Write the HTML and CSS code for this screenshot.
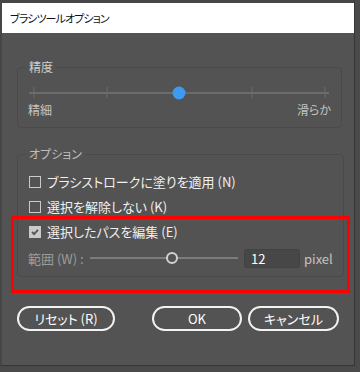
FILE: index.html
```html
<!DOCTYPE html>
<html lang="ja">
<head>
    <meta charset="UTF-8">
    <title>ブラシツールオプション</title>
    <link rel="stylesheet" href="styles.css">
</head>
<body>
    <div class="dialog">
        <div class="titlebar">ブラシツールオプション</div>

        <div class="content">
            <!-- 精度 -->
            <fieldset class="group group-precision">
                <legend>精度</legend>
                <svg class="slider" width="302" height="14" viewBox="0 0 302 14">
                    <line x1="0" y1="7" x2="300" y2="7" stroke="#6c6c6c" stroke-width="2"/>
                    <line x1="5" y1="1" x2="5" y2="12" stroke="#6c6c6c" stroke-width="1"/>
                    <line x1="78" y1="1" x2="78" y2="12" stroke="#6c6c6c" stroke-width="1"/>
                    <line x1="223" y1="1" x2="223" y2="12" stroke="#6c6c6c" stroke-width="1"/>
                    <line x1="296" y1="1" x2="296" y2="12" stroke="#6c6c6c" stroke-width="1"/>
                    <circle cx="150" cy="7" r="6.5" fill="#3e9af0"/>
                </svg>
                <div class="slider-labels">
                    <span>精細</span>
                    <span>滑らか</span>
                </div>
            </fieldset>

            <!-- オプション -->
            <fieldset class="group group-options">
                <legend>オプション</legend>
                <label class="check"><span class="box"></span>ブラシストロークに塗りを適用 (N)</label>
                <label class="check"><span class="box"></span>選択を解除しない (K)</label>
                <label class="check"><span class="box checked">
                    <svg width="10" height="10" viewBox="0 0 10 10"><path d="M2 5 L4.1 7.1 L8 2.8" fill="none" stroke="#555" stroke-width="1.8"/></svg>
                </span>選択したパスを編集 (E)</label>
                <div class="range-row">
                    <span class="range-label">範囲 (W) :</span>
                    <svg class="range-slider" width="150" height="14" viewBox="0 0 150 14">
                        <line x1="0" y1="7" x2="148" y2="7" stroke="#7c7c7c" stroke-width="2"/>
                        <circle cx="82" cy="7" r="5" fill="#535353" stroke="#d2d2d2" stroke-width="2"/>
                    </svg>
                    <div class="num-input">12</div>
                    <span class="unit">pixel</span>
                </div>
            </fieldset>

            <div class="buttons">
                <button class="btn btn-reset">リセット (R)</button>
                <button class="btn btn-ok">OK</button>
                <button class="btn btn-cancel">キャンセル</button>
            </div>

            <!-- 強調枠 -->
            <div class="highlight"></div>
        </div>
    </div>
</body>
</html>
```

FILE: styles.css
```css
/* 基本 */
body {
    margin: 0;
    background: #4a4a4a;
    font-family: "Noto Sans CJK JP", "Noto Sans", sans-serif;
    font-feature-settings: "palt";
    font-size: 12px;
    color: #ececec;
}

/* ダイアログ */
.dialog {
    width: 352px;
    height: 362px;
    background: #535353;
    border-top: 3px solid #464646;
    border-left: 2px solid #464646;
    border-right: 1px solid #363636;
    border-bottom: 1px solid #363636;
}

.titlebar {
    height: 30px;
    background: #fff;
    color: #111;
    line-height: 30px;
    padding-left: 8px;
    font-size: 11px;
    letter-spacing: -0.9px;
}

.content {
    position: relative;
    padding: 27px 13px 0 15px;
}

/* グループ枠 */
.group {
    margin: 0;
    border: 1px solid #4a4a4a;
    border-radius: 4px;
    padding: 0 10px;
}

.group legend {
    padding: 0 3px;
    margin-left: -2px;
    line-height: 14px;
}

.group-precision {
    height: 54px;
    padding-top: 12px;
}

.group-precision legend {
    color: #cfcfcf;
}

.slider {
    display: block;
    margin-left: 1px;
}

.slider-labels {
    display: flex;
    justify-content: space-between;
    width: 303px;
    color: #c4c4c4;
    line-height: 14px;
    margin-top: 3px;
}

.group-options {
    margin-top: 19px;
    height: 120px;
    padding-top: 8px;
}

.group-options legend {
    color: #bdbdbd;
}

/* チェックボックス */
.check {
    display: flex;
    align-items: center;
    height: 25px;
    color: #f0f0f0;
    font-size: 13px;
}

.box {
    width: 10px;
    height: 10px;
    border: 1px solid #cacaca;
    margin: 0 6px 0 1px;
    display: flex;
}

.box.checked {
    background: #cacaca;
}

/* 範囲 */
.range-row {
    display: flex;
    align-items: center;
    height: 28px;
    font-size: 13px;
}

.range-label {
    color: #9c9c9c;
    width: 62px;
}

.range-slider {
    display: block;
}

.num-input {
    width: 48px;
    height: 17px;
    margin-left: 4px;
    padding-left: 6px;
    background: #474747;
    border: 1px solid #424242;
    border-radius: 2px;
    color: #fff;
    line-height: 17px;
}

.unit {
    color: #c4c4c4;
    margin-left: 4px;
}

/* ボタン */
.buttons {
    display: flex;
    margin-top: 29px;
}

.btn {
    height: 25px;
    background: transparent;
    color: #fff;
    border: 2px solid #f2f2f2;
    border-radius: 13px;
    font-family: inherit;
    font-feature-settings: "palt";
    font-size: 13px;
    padding: 0;
}

.btn-reset {
    width: 98px;
}

.btn-ok {
    width: 90px;
    margin-left: 37px;
}

.btn-cancel {
    width: 91px;
    margin-left: 6px;
}

/* 赤い強調枠 */
.highlight {
    position: absolute;
    left: 9px;
    top: 183px;
    width: 333px;
    height: 71px;
    border: 3px solid #ff0000;
}
```
